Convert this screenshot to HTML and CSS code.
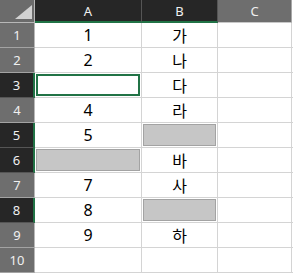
FILE: index.html
```html
<!DOCTYPE html>
<html lang="ko">
<head>
    <meta charset="UTF-8">
    <meta name="viewport" content="width=device-width, initial-scale=1.0">
    <title>시트</title>
    <link rel="stylesheet" href="styles.css">
</head>
<body>
    <div class="hoja">
        <div class="esquina"><span class="triangulo"></span></div>
        <div class="col-head activa">A</div>
        <div class="col-head activa">B</div>
        <div class="col-head">C</div>
        <div class="col-head resto"></div>

        <div class="row-head">1</div>
        <div class="celda">1</div>
        <div class="celda">가</div>
        <div class="celda"></div>
        <div class="celda resto"></div>

        <div class="row-head">2</div>
        <div class="celda">2</div>
        <div class="celda">나</div>
        <div class="celda"></div>
        <div class="celda resto"></div>

        <div class="row-head activa">3</div>
        <div class="celda actual"></div>
        <div class="celda">다</div>
        <div class="celda"></div>
        <div class="celda resto"></div>

        <div class="row-head">4</div>
        <div class="celda">4</div>
        <div class="celda">라</div>
        <div class="celda"></div>
        <div class="celda resto"></div>

        <div class="row-head activa">5</div>
        <div class="celda">5</div>
        <div class="celda marcada"></div>
        <div class="celda"></div>
        <div class="celda resto"></div>

        <div class="row-head activa">6</div>
        <div class="celda marcada"></div>
        <div class="celda">바</div>
        <div class="celda"></div>
        <div class="celda resto"></div>

        <div class="row-head">7</div>
        <div class="celda">7</div>
        <div class="celda">사</div>
        <div class="celda"></div>
        <div class="celda resto"></div>

        <div class="row-head activa">8</div>
        <div class="celda">8</div>
        <div class="celda marcada"></div>
        <div class="celda"></div>
        <div class="celda resto"></div>

        <div class="row-head">9</div>
        <div class="celda">9</div>
        <div class="celda">하</div>
        <div class="celda"></div>
        <div class="celda resto"></div>

        <div class="row-head">10</div>
        <div class="celda"></div>
        <div class="celda"></div>
        <div class="celda"></div>
        <div class="celda resto"></div>
    </div>
</body>
</html>
```

FILE: styles.css
```css
* {
    box-sizing: border-box;
}

body {
    margin: 0;
    background: #fff;
    overflow: hidden;
    font-family: "Noto Sans", "Noto Sans CJK KR", sans-serif;
}

.hoja {
    display: grid;
    grid-template-columns: 35px 107px 76px 74px 1fr;
    grid-template-rows: 23px repeat(10, 25px);
    width: 293px;
    height: 273px;
}

.esquina {
    position: relative;
    background: #6b6b6b;
    border-right: 1px solid #b8b8b8;
    border-bottom: 1px solid #b8b8b8;
}

.triangulo {
    position: absolute;
    right: 2px;
    bottom: 3px;
    width: 0;
    height: 0;
    border-left: 17px solid transparent;
    border-bottom: 14px solid #d2d2d2;
}

.col-head {
    display: flex;
    align-items: center;
    justify-content: center;
    background: #6e6e6e;
    color: #f0f0f0;
    font-size: 13px;
    border-right: 1px solid #a8a8a8;
    border-bottom: 1px solid #c8c8c8;
}

.col-head.activa {
    background: #262626;
    border-right: 1px solid #555;
    border-bottom: 2px solid #217346;
}

.col-head.resto {
    background: #fff;
    border: none;
}

.row-head {
    display: flex;
    align-items: center;
    justify-content: center;
    background: #6e6e6e;
    color: #f0f0f0;
    font-size: 13px;
    border-right: 1px solid #b8b8b8;
    border-bottom: 1px solid #a3a3a3;
}

.row-head.activa {
    background: #262626;
    border-right: 2px solid #217346;
    border-bottom: 1px solid #555;
}

.celda {
    display: flex;
    align-items: center;
    justify-content: center;
    color: #000;
    font-size: 16px;
    padding-bottom: 1px;
    border-right: 1px solid #d4d4d4;
    border-bottom: 1px solid #d4d4d4;
}

.celda.resto {
    border-right: none;
}

.celda.actual {
    box-shadow: inset 0 0 0 1px #fff, inset 0 0 0 3px #217346;
}

.celda.marcada {
    background: #c6c6c6;
    box-shadow: inset 0 0 0 1px #fff, inset 0 0 0 2px #a3a3a3;
}
```
